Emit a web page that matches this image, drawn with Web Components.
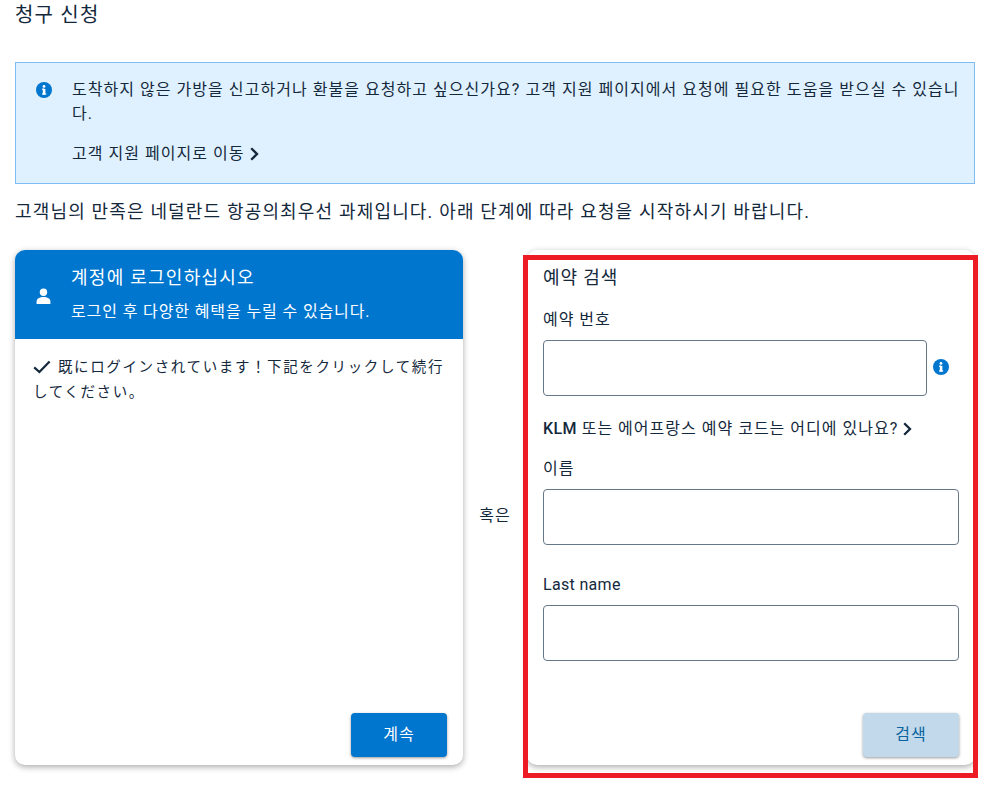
<!DOCTYPE html>
<html lang="ko">
<head>
<meta charset="utf-8">
<title>청구 신청</title>
<style>
  html, body { margin: 0; background: #fff; }
  body {
    color: #14283c;
    font-family: "Roboto", "Noto Sans CJK KR", sans-serif;
    font-size: 16px;
    letter-spacing: .06em;
  }
</style>
</head>
<body>
<claim-page></claim-page>

<script>
/* === ICONS ==================================================================================== */

const ICON_INFO = /* html */ `<svg width="16" height="16" viewBox="0 0 16 16"><circle cx="8" cy="8" r="8" fill="#0076cf"/><rect x="6.8" y="6.8" width="2.6" height="5.8" fill="#fff"/><rect x="6" y="6.6" width="2" height="1.2" fill="#fff"/><rect x="6" y="11.4" width="4.2" height="1.2" fill="#fff"/><circle cx="8" cy="4.4" r="1.4" fill="#fff"/></svg>`;
const ICON_CHEVRON = /* html */ `<svg width="9" height="14" viewBox="0 0 9 14"><path d="M1.2 1.2 7 7l-5.8 5.8" fill="none" stroke="#14283c" stroke-width="2.3"/></svg>`;

/* === COMPONENTS =============================================================================== */

//=============//
// INFO BANNER //
//=============//

class InfoBanner extends HTMLElement {
  connectedCallback() {
    this.attachShadow({ mode: 'open' }).innerHTML = /* html */ `
      <style>
        :host {
          background: #dff1ff;
          border: solid 1px #7fbcf3;
          box-sizing: border-box;
          display: grid;
          gap: 0 20px;
          grid-template-columns: 16px 1fr;
          height: 122px;
          letter-spacing: .065em;
          padding: 15px 10px 0 20px;
        }
        .icon { height: 16px; margin-top: 4px; }
        p { line-height: 24px; margin: 0; }
        a { align-items: center; color: inherit; display: flex; gap: 5px; line-height: 24px; margin-top: 16px; text-decoration: none; }
        svg { display: block; }
      </style>
      <div class="icon">${ICON_INFO}</div>
      <div>
        <p><slot></slot></p>
        <a href="#"><slot name="link"></slot>${ICON_CHEVRON}</a>
      </div>`;
  }
}
customElements.define('info-banner', InfoBanner);

//=======//
// FIELD //
//=======//

class TextField extends HTMLElement {
  connectedCallback() {
    this.attachShadow({ mode: 'open' }).innerHTML = /* html */ `
      <style>
        :host { display: block; }
        label { display: block; line-height: 24px; margin-bottom: 8px; }
        input {
          background: #fff;
          border: solid 1px #667788;
          border-radius: 4px;
          box-sizing: border-box;
          display: block;
          height: 56px;
          width: 100%;
        }
      </style>
      <label><slot></slot></label>
      <input type="text">`;
  }
}
customElements.define('text-field', TextField);

//========//
// BUTTON //
//========//

class ActionButton extends HTMLElement {
  connectedCallback() {
    this.attachShadow({ mode: 'open' }).innerHTML = /* html */ `
      <style>
        :host {
          align-items: center;
          background: #0076cf;
          border-radius: 4px;
          box-shadow: 0 1px 3px #00000066;
          box-sizing: border-box;
          color: #fff;
          display: flex;
          height: 44px;
          justify-content: center;
          padding-bottom: 4px;
          width: 96px;
        }
        :host([disabled]) { background: #c1d9ea; color: #0b639f; }
      </style>
      <slot></slot>`;
  }
}
customElements.define('action-button', ActionButton);

//======//
// CARD //
//======//

class BaseCard extends HTMLElement {
  connectedCallback() {
    this.attachShadow({ mode: 'open' }).innerHTML = /* html */ `
      <style>
        :host {
          background: #fff;
          border-radius: 10px;
          box-shadow: 0 2px 6px #00000055;
          display: flex;
          flex-direction: column;
          overflow: hidden;
        }
        .body { display: flex; flex: 1; flex-direction: column; }
        .foot { display: flex; justify-content: flex-end; padding: 0 16px 8px; }
      </style>
      <slot name="head"></slot>
      <div class="body"><slot></slot></div>
      <div class="foot"><slot name="foot"></slot></div>`;
  }
}
customElements.define('base-card', BaseCard);

//=============//
// LOGIN HEAD  //
//=============//

class LoginHead extends HTMLElement {
  connectedCallback() {
    this.attachShadow({ mode: 'open' }).innerHTML = /* html */ `
      <style>
        :host {
          align-items: center;
          background: #0076cf;
          box-sizing: border-box;
          color: #fff;
          display: flex;
          gap: 20px;
          height: 89px;
          letter-spacing: .055em;
          padding: 0 20px;
        }
        svg { display: block; margin-top: 2px; }
        h2 { font-size: 18px; font-weight: 400; letter-spacing: .07em; line-height: 24px; margin: 1px 0 10px; }
        p { line-height: 24px; margin: 0; }
      </style>
      <svg width="16" height="16" viewBox="0 0 16 16" fill="#fff"><circle cx="8.5" cy="4.2" r="3.7"/><path d="M1.6 16v-2.4C1.6 10.6 4.6 9 8.5 9s6.9 1.6 6.9 4.6V16z"/></svg>
      <div>
        <h2><slot></slot></h2>
        <p><slot name="sub"></slot></p>
      </div>`;
  }
}
customElements.define('login-head', LoginHead);

//======//
// PAGE //
//======//

class ClaimPage extends HTMLElement {
  connectedCallback() {
    this.attachShadow({ mode: 'open' }).innerHTML = /* html */ `
      <style>
        :host {
          box-sizing: border-box;
          display: block;
          height: 793px;
          overflow: hidden;
          padding: 1px 20px 0 15px;
          position: relative;
        }
        h1 { font-size: 20px; font-weight: 400; letter-spacing: .06em; line-height: 28px; margin: 0 0 33px; }
        .lead { font-size: 18px; letter-spacing: .065em; line-height: 24px; margin: 16px 0 26px; }
        .cols { display: grid; gap: 0; grid-template-columns: 448px 64px 448px; height: 515px; }
        .or { align-items: center; display: flex; justify-content: center; padding-top: 12px; }
        .note { font-family: "Noto Sans CJK JP", sans-serif; font-size: 14.5px; letter-spacing: 1.62px; line-height: 25px; padding: 14px 18px 0 18px; }
        .note svg { margin-right: 7px; vertical-align: -2px; }
        .form { display: flex; flex-direction: column; padding: 15px 16px 0; }
        h3 { font-size: 18px; font-weight: 400; letter-spacing: .05em; line-height: 26px; margin: 0 0 17px; }
        .with-info { align-items: flex-end; display: flex; gap: 6px; }
        .with-info text-field { flex: 1; }
        .with-info svg { display: block; margin: 0 10px 21px 0; }
        .help { align-items: center; display: flex; gap: 5px; letter-spacing: .063em; line-height: 24px; margin: 21px 0 16px; }
        .help b { font-weight: 500; letter-spacing: .02em; }
        .last { letter-spacing: .02em; margin-top: 28px; }
        .frame { border: solid 5px #ed1c24; box-sizing: border-box; height: 523px; left: 523px; pointer-events: none; position: absolute; top: 255px; width: 455px; }
      </style>
      <h1>청구 신청</h1>
      <info-banner>
        도착하지 않은 가방을 신고하거나 환불을 요청하고 싶으신가요? 고객 지원 페이지에서 요청에 필요한 도움을 받으실 수 있습니다.
        <span slot="link">고객 지원 페이지로 이동</span>
      </info-banner>
      <p class="lead">고객님의 만족은 네덜란드 항공의최우선 과제입니다. 아래 단계에 따라 요청을 시작하시기 바랍니다.</p>
      <div class="cols">
        <base-card>
          <login-head slot="head">계정에 로그인하십시오<span slot="sub">로그인 후 다양한 혜택을 누릴 수 있습니다.</span></login-head>
          <div class="note" lang="ja"><svg width="18" height="14" viewBox="0 0 18 14"><path d="M1.2 7.4 6.4 12 16.6 1.6" fill="none" stroke="#14283c" stroke-width="2.2"/></svg>既にログインされています！下記をクリックして続行してください。</div>
          <action-button slot="foot">계속</action-button>
        </base-card>
        <div class="or">혹은</div>
        <base-card>
          <div class="form">
            <h3>예약 검색</h3>
            <div class="with-info">
              <text-field>예약 번호</text-field>
              ${ICON_INFO}
            </div>
            <div class="help"><span><b>KLM</b> 또는 에어프랑스 예약 코드는 어디에 있나요?</span>${ICON_CHEVRON}</div>
            <text-field>이름</text-field>
            <text-field class="last">Last name</text-field>
          </div>
          <action-button slot="foot" disabled>검색</action-button>
        </base-card>
      </div>
      <div class="frame"></div>`;
  }
}
customElements.define('claim-page', ClaimPage);
</script>
</body>
</html>
